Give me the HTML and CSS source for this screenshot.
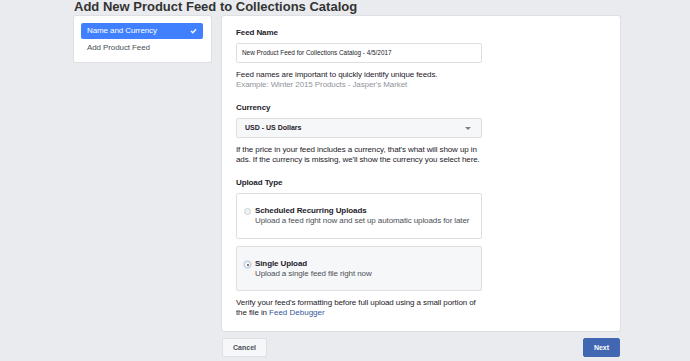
FILE: index.html
```html
<!DOCTYPE html>
<html lang="en">
<head>
    <meta charset="UTF-8">
    <title>Add New Product Feed</title>
    <link rel="stylesheet" href="styles.css">
</head>
<body>
    <div class="page">
        <h1>Add New Product Feed to Collections Catalog</h1>

        <div class="layout">
            <div class="steps">
                <div class="step active">
                    <span>Name and Currency</span>
                    <svg class="check" width="7" height="6" viewBox="0 0 7 6"><path d="M1 3 L2.8 4.7 L6 1.2" fill="none" stroke="#fff" stroke-width="1.3"/></svg>
                </div>
                <div class="step">Add Product Feed</div>
            </div>

            <div class="card">
                <div class="field">
                    <label>Feed Name</label>
                    <div class="input">New Product Feed for Collections Catalog - 4/5/2017</div>
                    <p class="help">Feed names are important to quickly identify unique feeds.<br>
                        <span class="muted">Example: Winter 2015 Products - Jasper's Market</span></p>
                </div>

                <div class="field">
                    <label>Currency</label>
                    <div class="input select">
                        <span>USD - US Dollars</span>
                        <span class="arrow"></span>
                    </div>
                    <p class="help">If the price in your feed includes a currency, that's what will show up in ads. If the currency is missing, we'll show the currency you select here.</p>
                </div>

                <div class="field">
                    <label>Upload Type</label>
                    <div class="option">
                        <span class="radio"></span>
                        <div>
                            <div class="option-title">Scheduled Recurring Uploads</div>
                            <div class="option-desc">Upload a feed right now and set up automatic uploads for later</div>
                        </div>
                    </div>
                    <div class="option selected">
                        <span class="radio on"></span>
                        <div>
                            <div class="option-title">Single Upload</div>
                            <div class="option-desc">Upload a single feed file right now</div>
                        </div>
                    </div>
                    <p class="help">Verify your feed's formatting before full upload using a small portion of the file in <a href="#">Feed Debugger</a></p>
                </div>
            </div>
        </div>

        <div class="footer">
            <button class="btn">Cancel</button>
            <button class="btn primary">Next</button>
        </div>
    </div>
</body>
</html>
```

FILE: styles.css
```css
body {
    margin: 0;
    background: #e9ebee;
    font-family: "Liberation Sans", Arial, sans-serif;
    font-size: 8px;
    letter-spacing: -0.1px;
    color: #1d2129;
}
.page {
    width: 546px;
    margin-left: 74px;
}
h1 {
    margin: 0;
    font-size: 13px;
    line-height: 15px;
    letter-spacing: 0;
    color: #333;
    margin-top: -1px;
}
.layout {
    display: flex;
    gap: 11px;
    align-items: flex-start;
    margin-top: 2px;
}
.steps {
    width: 137px;
    box-sizing: border-box;
    background: #fff;
    border-radius: 2px;
    box-shadow: 0 0 0 1px #dddfe2;
    padding: 7px 8px 6px 7px;
}
.step {
    height: 16px;
    line-height: 16px;
    padding: 0 6px;
    color: #4b4f56;
}
.step + .step {
    margin-top: 1px;
}
.step.active {
    display: flex;
    justify-content: space-between;
    align-items: center;
    background: #4080ff;
    color: #fff;
    border-radius: 2px;
}
.card {
    width: 398px;
    box-sizing: border-box;
    background: #fff;
    border-radius: 2px;
    box-shadow: 0 0 0 1px #dddfe2;
    padding: 12px 14px 0;
    height: 315px;
}
label {
    display: block;
    font-weight: bold;
    color: #1d2129;
    line-height: 10px;
    margin-bottom: 5px;
}
.input {
    width: 246px;
    box-sizing: border-box;
    height: 20px;
    border: 1px solid #dddfe2;
    border-radius: 2px;
    padding: 0 5px;
    line-height: 18px;
    font-size: 6.4px;
    letter-spacing: 0;
}
.select {
    display: flex;
    justify-content: space-between;
    align-items: center;
    background: #f6f7f9;
    font-weight: bold;
    font-size: 7px;
    padding: 0 7px 0 8px;
}
.arrow {
    width: 0;
    height: 0;
    border-left: 3px solid transparent;
    border-right: 3px solid transparent;
    border-top: 3px solid #7f7f7f;
    margin-right: 3px;
}
.help {
    margin: 7px 0 0;
    width: 252px;
    line-height: 10px;
    color: #1d2129;
}
.muted {
    color: #90949c;
}
.field {
    margin-bottom: 13px;
}
.option {
    display: flex;
    align-items: flex-start;
    width: 246px;
    box-sizing: border-box;
    border: 1px solid #dddfe2;
    border-radius: 2px;
    padding: 12px 4px 0 7px;
    height: 46px;
    margin-bottom: 7px;
    line-height: 10px;
}
.option.selected {
    background: #f6f7f9;
    height: 45px;
    margin-bottom: 0;
}
.option-title {
    font-weight: bold;
}
.option-desc {
    color: #4b4f56;
    white-space: nowrap;
}
.radio {
    width: 5px;
    height: 5px;
    border: 1px solid #ccd0d5;
    border-radius: 50%;
    background: #f1f2f4;
    margin: 2px 4px 0 0;
    flex-shrink: 0;
    position: relative;
}
.radio.on {
    background: #fff;
    border-color: #bec3c9;
    box-shadow: 0 0 0 1px #d8e4fc;
}
.radio.on::after {
    content: "";
    position: absolute;
    left: 1.5px;
    top: 1.5px;
    width: 2px;
    height: 2px;
    border-radius: 50%;
    background: #4b4f56;
}
a {
    color: #365899;
    text-decoration: none;
    letter-spacing: 0;
}
.footer {
    display: flex;
    justify-content: space-between;
    margin-top: 7px;
    padding-left: 148px;
}
.btn {
    font-family: inherit;
    font-size: 7px;
    font-weight: bold;
    height: 19px;
    width: 45px;
    padding: 0;
    border: 1px solid #dddfe2;
    border-radius: 2px;
    background: #f6f7f9;
    color: #4b4f56;
}
.btn.primary {
    width: 37px;
    background: #4267b2;
    border-color: #4267b2;
    color: #fff;
}
```
